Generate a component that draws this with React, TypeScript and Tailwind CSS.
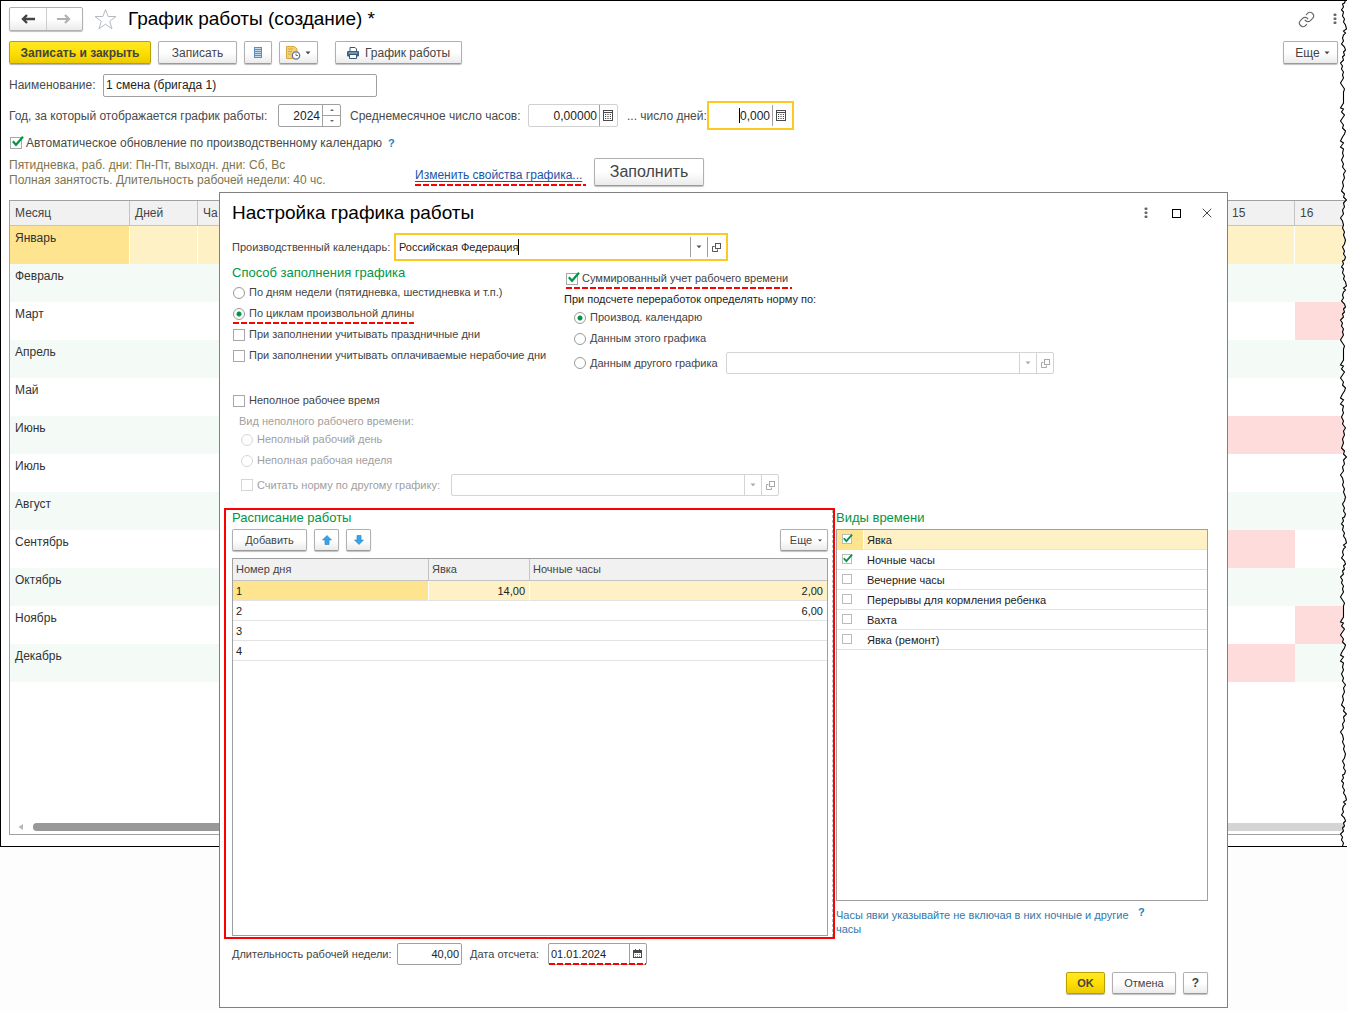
import type { ReactNode } from 'react';
import { Link as LinkIcon, X } from 'lucide-react';

const btn =
  'flex shrink-0 items-center justify-center rounded-[2px] border border-[#b0b0b0] border-b-[#9a9a9a] bg-gradient-to-b from-white from-50% to-[#ebebeb] text-[#444] shadow-[0_1px_1px_rgba(0,0,0,0.25)]';
const yellowBtn =
  'flex shrink-0 items-center justify-center rounded-[2px] border border-[#b8a000] bg-gradient-to-b from-[#ffe924] via-[#ffdf00] to-[#eccb00] font-bold text-[#444] shadow-[0_1px_1px_rgba(0,0,0,0.3)]';

function Caret() {
  return (
    <svg width="6" height="4" viewBox="0 0 6 4" fill="currentColor" aria-hidden="true">
      <path d="M0.5 0.5h5L3 3.3z" />
    </svg>
  );
}

function Dots() {
  return (
    <svg width="4" height="12" viewBox="0 0 4 12" fill="#666" aria-hidden="true">
      <rect x="0.5" y="0.5" width="3" height="2.6" rx="1" />
      <rect x="0.5" y="4.5" width="3" height="2.6" rx="1" />
      <rect x="0.5" y="8.5" width="3" height="2.6" rx="1" />
    </svg>
  );
}

function OpenIcon() {
  return (
    <svg width="9" height="9" viewBox="0 0 9 9" fill="none" stroke="currentColor" aria-hidden="true">
      <rect x="3.5" y="0.5" width="5" height="5" />
      <path d="M2.5 3.5h-2v5h5v-2" />
    </svg>
  );
}

function CalcIcon() {
  return (
    <svg width="10" height="12" viewBox="0 0 10 12" fill="none" stroke="#4a4a4a" aria-hidden="true">
      <rect x="0.5" y="0.5" width="9" height="10" />
      <path d="M1 2.5h8" />
      <path d="M2 4.5h6M2 6.5h6M2 8.5h6" strokeDasharray="1.2 1.2" />
    </svg>
  );
}

function CalendarIcon() {
  return (
    <svg width="9" height="10" viewBox="0 0 9 10" fill="none" stroke="#4a4a4a" aria-hidden="true">
      <rect x="0.5" y="1.5" width="8" height="7" />
      <path d="M1 2.5h7M1 3.5h7M2.5 0v2M6.5 0v2" />
      <path d="M2 5.5h5M2 7.5h5" strokeDasharray="1 1" strokeOpacity="0.6" />
    </svg>
  );
}

function RedDashes() {
  return (
    <span className="absolute inset-x-0 -bottom-px h-0.5 bg-[repeating-linear-gradient(90deg,#f00_0_6px,transparent_6px_8px)]" />
  );
}

function Check({
  label,
  checked,
  disabled,
  className = '',
}: {
  label: string;
  checked?: boolean;
  disabled?: boolean;
  className?: string;
}) {
  return (
    <label className={`flex items-center gap-1 whitespace-nowrap ${disabled ? 'text-[#a0a0a0]' : ''} ${className}`}>
      <span className="relative flex">
        <input
          type="checkbox"
          defaultChecked={checked}
          disabled={disabled}
          className={`peer size-3 appearance-none border bg-white ${disabled ? 'border-[#d6d6d6]' : 'border-[#a8a8a8]'}`}
        />
        <svg
          className="pointer-events-none absolute bottom-0.5 left-0.5 hidden peer-checked:block"
          width="12"
          height="11"
          viewBox="0 0 12 11"
          fill="none"
          stroke="#009646"
          strokeWidth="2.2"
        >
          <path d="M0.8 5.2l3.2 3.6L11 0.8" />
        </svg>
      </span>
      {label}
    </label>
  );
}

function Radio({ label, name, checked, disabled }: { label: string; name: string; checked?: boolean; disabled?: boolean }) {
  return (
    <label className={`flex items-center gap-1 whitespace-nowrap ${disabled ? 'text-[#a0a0a0]' : ''}`}>
      <input
        type="radio"
        name={name}
        defaultChecked={checked}
        disabled={disabled}
        className={`size-3 appearance-none rounded-full border bg-white checked:bg-[radial-gradient(circle,#009646_0_2px,transparent_3px)] ${
          disabled ? 'border-[#d6d6d6]' : 'border-[#999]'
        }`}
      />
      {label}
    </label>
  );
}

function Picker({ label, value, disabled }: { label: string; value?: string; disabled?: boolean }) {
  const line = disabled ? 'border-[#d4d4d4]' : 'border-[#a0a0a0]';
  return (
    <div
      className={`flex bg-white ${
        disabled
          ? 'h-[22px] w-[328px] rounded-[2px] border border-[#d4d4d4] text-[#a8a8a8]'
          : 'w-[334px] border-2 border-[#fbc91f] p-0.5 text-[#555]'
      }`}
    >
      <input aria-label={label} defaultValue={value} disabled={disabled} className="min-w-0 flex-1 px-px text-[#222] outline-none" />
      <button aria-label="Выбрать" disabled={disabled} className={`flex w-[17px] items-center justify-center border-l ${line}`}>
        <Caret />
      </button>
      <button aria-label="Открыть" disabled={disabled} className={`flex w-[17px] items-center justify-center border-l ${line}`}>
        <OpenIcon />
      </button>
    </div>
  );
}

const months: [string, boolean, boolean][] = [
  ['Январь', false, false],
  ['Февраль', false, false],
  ['Март', false, true],
  ['Апрель', false, false],
  ['Май', false, false],
  ['Июнь', true, true],
  ['Июль', false, false],
  ['Август', false, false],
  ['Сентябрь', true, false],
  ['Октябрь', false, false],
  ['Ноябрь', false, true],
  ['Декабрь', true, false],
];

const edge = [
  [6, 0], [5, 3], [3, 4], [4, 7], [2, 10], [4, 12], [3, 16], [5, 19], [4, 22], [6, 25], [7, 29], [4, 31], [6, 33], [4, 35],
  [3, 38], [4, 41], [2, 44], [5, 47], [6, 50], [4, 52], [5, 55], [3, 57], [4, 60], [1, 63], [3, 66], [2, 69], [4, 72], [3, 75],
  [4, 78], [1, 83], [3, 86], [5, 89], [4, 92], [4, 103], [1, 108], [4, 109], [2, 112], [5, 115], [3, 118], [1, 121], [4, 125],
  [3, 128], [6, 131], [5, 134], [3, 137], [1, 141], [4, 143], [1, 147], [4, 149], [3, 153], [4, 156], [2, 160], [4, 164], [3, 167],
  [6, 171], [4, 174], [5, 178], [3, 182], [4, 186], [2, 191], [5, 194], [4, 197], [7, 200], [4, 203], [5, 207], [3, 210], [4, 214],
  [1, 218], [3, 221], [4, 225], [3, 228], [5, 232], [4, 235], [6, 240], [5, 244], [3, 247], [5, 251], [4, 254],
];

function TornEdge() {
  const points = [0, 257, 514, 771]
    .flatMap((base) => edge.map(([x, y]) => [x, y + base]))
    .filter(([, y]) => y <= 847)
    .map(([x, y]) => `${x + 0.5},${y}`)
    .join(' ');
  return (
    <svg className="absolute -top-px right-0" width="8" height="846" viewBox="0 0 8 846" fill="none" aria-hidden="true">
      <polygon points={`${points} 8,847 8,0`} fill="#fff" />
      <polyline points={`${points} 4.5,847`} stroke="#000" strokeWidth="1.1" />
      <path d="M5 0.5h3" stroke="#000" />
    </svg>
  );
}

function MainTable() {
  const th = 'border-r border-b border-[#c4c4c4] bg-[#f1f1f1] px-[5px] text-left font-normal text-[#444]';
  return (
    <div className="mt-3 flex min-h-[635px] flex-col border border-r-0 border-[#a0a0a0] bg-white">
      <table className="w-full table-fixed border-separate border-spacing-0 text-xs">
        <colgroup>
          <col className="w-[120px]" />
          <col className="w-[68px]" />
          <col className="w-[68px]" />
          <col />
          <col className="w-[68px]" />
          <col className="w-[52px]" />
        </colgroup>
        <thead>
          <tr className="h-[25px]">
            <th className={th}>Месяц</th>
            <th className={th}>Дней</th>
            <th className={th}>Ча</th>
            <th className={th} />
            <th className={th}>15</th>
            <th className={th}>16</th>
          </tr>
        </thead>
        <tbody className="text-[#333]">
          {months.map(([name, d15, d16], i) => {
            const base = i === 0 ? 'bg-[#fdf1c5] border-r border-white' : i % 2 ? 'bg-[#f4fbf7]' : 'bg-white';
            return (
              <tr key={name} className="h-[38px]">
                <td className={`px-[5px] pt-1 align-top ${i === 0 ? 'border-r border-white bg-[#ffe48f]' : base}`}>{name}</td>
                <td className={base} />
                <td className={base} />
                <td className={base} />
                <td className={d15 ? 'bg-[#ffdcdc]' : base} />
                <td className={d16 ? 'bg-[#ffdcdc]' : base} />
              </tr>
            );
          })}
        </tbody>
      </table>
      <div className="mt-auto mb-[3px] flex h-2 items-center">
        <svg className="mr-2.5 ml-2" width="5" height="6" viewBox="0 0 5 6" fill="#b8b8b8" aria-hidden="true">
          <path d="M5 0v6L0.5 3z" />
        </svg>
        <div className="h-2 flex-1 rounded-full bg-[#d4d4d4]">
          <div className="h-2 w-3/5 rounded-full bg-[#999]" />
        </div>
      </div>
    </div>
  );
}

function MainWindow() {
  return (
    <main className="relative border-y border-l border-black bg-white pb-[11px] pl-2 text-xs text-[#4a4a4a]">
      <header className="flex h-9 items-center">
        <div className="flex h-6 w-[74px] overflow-hidden rounded-[2px] border border-[#b0b0b0] bg-gradient-to-b from-white from-50% to-[#ebebeb] shadow-[0_1px_1px_rgba(0,0,0,0.25)]">
          <button aria-label="Назад" className="flex flex-1 items-center justify-center border-r border-[#ccc]">
            <svg width="14" height="10" viewBox="0 0 14 10" fill="none" stroke="#444" strokeWidth="2.4" aria-hidden="true">
              <path d="M14 5H2M6 1L2 5l4 4" />
            </svg>
          </button>
          <button aria-label="Вперед" className="flex flex-1 items-center justify-center">
            <svg width="14" height="10" viewBox="0 0 14 10" fill="none" stroke="#b0b0b0" strokeWidth="2.2" aria-hidden="true">
              <path d="M0 5h12M8 1l4 4-4 4" />
            </svg>
          </button>
        </div>
        <button aria-label="В избранное" className="ml-[11px]">
          <svg width="23" height="22" viewBox="0 0 23 22" fill="none" stroke="#b4bac4" aria-hidden="true">
            <path d="M11.5 1.5l2.6 7h7.9l-6.3 4.8 2.3 7.5-6.5-4.6L5 20.8l2.3-7.5L1 8.5h7.9z" />
          </svg>
        </button>
        <h1 className="ml-[11px] text-[19px] text-black">График работы (создание) *</h1>
        <button aria-label="Ссылка" className="ml-auto text-[#666]">
          <LinkIcon size={17} strokeWidth={1.6} />
        </button>
        <button aria-label="Меню" className="mr-2.5 ml-[18px]">
          <Dots />
        </button>
      </header>

      <div className="mt-1 flex h-6 pr-[9px] [&>button]:h-[23px]">
        <button className={`${yellowBtn} w-[142px]`}>Записать и закрыть</button>
        <button className={`${btn} ml-[7px] w-[79px]`}>Записать</button>
        <button aria-label="Список" className={`${btn} ml-[7px] w-7`}>
          <svg width="8" height="12" viewBox="0 0 8 12" aria-hidden="true">
            <rect width="8" height="11" fill="#5f8fb8" />
            <path d="M1 1.5h6M1 3.5h6M1 5.5h6M1 7.5h6M1 9.5h6" stroke="#c4dcee" />
          </svg>
        </button>
        <button aria-label="Отчеты" className={`${btn} ml-[7px] w-[39px] gap-1`}>
          <svg width="15" height="14" viewBox="0 0 15 14" fill="none" aria-hidden="true">
            <path d="M0.5 0.5h8l2.5 2.5v9.5H0.5z" fill="#f3d078" stroke="#d4a843" />
            <path d="M2 3h5M2 5.5h4M2 8h3" stroke="#d4a843" />
            <circle cx="10" cy="9.5" r="3.7" fill="#fff" stroke="#5b7896" strokeWidth="1.3" />
            <path d="M10 9.5V7.5M10 9.5h2" stroke="#d0506a" />
          </svg>
          <Caret />
        </button>
        <button className={`${btn} ml-[17px] w-[127px] gap-1.5`}>
          <svg width="12" height="12" viewBox="0 0 12 12" aria-hidden="true">
            <path d="M3 0.5h5l1.5 1.5v3H3z" fill="#fff" stroke="#38566f" />
            <rect y="4" width="12" height="5.5" rx="1" fill="#38607f" />
            <path d="M1.5 6h9" stroke="#a9cbe3" />
            <path d="M2.5 7.5h7v4h-7z" fill="#fff" stroke="#38566f" />
          </svg>
          График работы
        </button>
        <button className={`${btn} ml-auto w-[55px] gap-1 pl-1`}>
          Еще <Caret />
        </button>
      </div>

      <div className="mt-2 flex h-6 items-center">
        <label htmlFor="name" className="w-[94px]">Наименование:</label>
        <input id="name" defaultValue="1 смена (бригада 1)" className="h-[23px] w-[274px] rounded-[2px] border border-[#a0a0a0] px-0.5 text-[#222]" />
      </div>

      <div className="mt-1 flex h-[29px] items-center whitespace-nowrap">
        <label htmlFor="year" className="w-[269px]">Год, за который отображается график работы:</label>
        <div className="flex h-[23px] w-[63px] rounded-[2px] border border-[#a0a0a0]">
          <input id="year" defaultValue="2024" className="min-w-0 flex-1 pr-0.5 text-right text-[#222]" />
          <div className="flex w-[18px] flex-col border-l border-[#a0a0a0] text-[#666]">
            <button aria-label="Больше" className="flex flex-1 items-center justify-center border-b border-[#a0a0a0]">
              <svg width="4" height="2" viewBox="0 0 4 2" fill="currentColor"><path d="M0 2L2 0l2 2z" /></svg>
            </button>
            <button aria-label="Меньше" className="flex flex-1 items-center justify-center">
              <svg width="4" height="2" viewBox="0 0 4 2" fill="currentColor"><path d="M0 0h4L2 2z" /></svg>
            </button>
          </div>
        </div>
        <label htmlFor="hours" className="ml-[9px] w-[178px]">Среднемесячное число часов:</label>
        <div className="flex h-[23px] w-[90px] rounded-[2px] border border-[#d0d0d0]">
          <input id="hours" defaultValue="0,00000" className="min-w-0 flex-1 pr-0.5 text-right text-[#222]" />
          <button aria-label="Калькулятор часов" className="flex w-[18px] items-center border-l border-[#a0a0a0] pl-[3px]">
            <CalcIcon />
          </button>
        </div>
        <label htmlFor="days" className="ml-[9px] w-20">... число дней:</label>
        <div className="relative flex h-[29px] w-[87px] border-2 border-[#fbc91f] p-0.5">
          <input id="days" defaultValue="0,000" className="min-w-0 flex-1 pr-0.5 text-right text-[#222]" />
          <button aria-label="Калькулятор дней" className="flex w-[18px] items-center border-l border-[#a0a0a0] pl-[3px]">
            <CalcIcon />
          </button>
          <span className="absolute top-[5px] left-[30px] h-[15px] w-px bg-black" />
        </div>
      </div>

      <div className="mt-[3px] flex h-5 items-center gap-1.5 pl-px">
        <Check label="Автоматическое обновление по производственному календарю" checked />
        <button aria-label="Справка" className="text-[11px] font-bold text-[#1e7fc0]">?</button>
      </div>

      <div className="mt-[5px] flex h-[30px] items-start">
        <p className="w-[406px] leading-[15px] text-[#7d754d]">
          Пятидневка, раб. дни: Пн-Пт, выходн. дни: Сб, Вс
          <br />
          Полная занятость. Длительность рабочей недели: 40 чс.
        </p>
        <span className="relative mt-[7px] flex h-5 w-[171px] items-center">
          <a href="#properties" className="whitespace-nowrap text-[#1a55a8] underline underline-offset-2">Изменить свойства графика...</a>
          <RedDashes />
        </span>
        <button className={`${btn} ml-2 h-[28px] w-[110px] text-base`}>Заполнить</button>
      </div>

      <MainTable />
      <TornEdge />
    </main>
  );
}

const schedule = [
  ['1', '14,00', '2,00'],
  ['2', '', '6,00'],
  ['3', '', ''],
  ['4', '', ''],
];

const kinds: [string, boolean][] = [
  ['Явка', true],
  ['Ночные часы', true],
  ['Вечерние часы', false],
  ['Перерывы для кормления ребенка', false],
  ['Вахта', false],
  ['Явка (ремонт)', false],
];

function Heading({ children }: { children: ReactNode }) {
  return <h3 className="text-[13px] leading-4 text-[#009646]">{children}</h3>;
}

function Schedule() {
  const th = 'border-r border-b border-[#c4c4c4] bg-[#f1f1f1] px-[3px] text-left font-normal text-[#444] last:border-r-0';
  return (
    <section className="relative h-[431px] border-2 border-[#f00] pr-[5px] pl-1.5">
      <Heading>Расписание работы</Heading>
      <div className="mt-[3px] flex h-[22px] gap-[7px]">
        <button className={`${btn} w-[75px]`}>Добавить</button>
        <button aria-label="Вверх" className={`${btn} w-[25px]`}>
          <svg width="10" height="10" viewBox="0 0 10 10" fill="#35a4e8" stroke="#2a7db5" strokeWidth="0.6" aria-hidden="true">
            <path d="M5 0.5L9.5 5H7v4.500H3V5H0.5z" />
          </svg>
        </button>
        <button aria-label="Вниз" className={`${btn} w-[25px]`}>
          <svg width="10" height="10" viewBox="0 0 10 10" fill="#35a4e8" stroke="#2a7db5" strokeWidth="0.6" aria-hidden="true">
            <path d="M5 9.5L9.5 5H7V0.500H3V5H0.5z" />
          </svg>
        </button>
        <button className={`${btn} ml-auto w-12 gap-1.5 pl-1`}>
          Еще
          <svg width="4" height="3" viewBox="0 0 4 3" fill="currentColor" aria-hidden="true">
            <path d="M0 0.5h4L2 2.5z" />
          </svg>
        </button>
      </div>
      <div className="mt-[7px] h-[378px] border border-[#a0a0a0]">
        <table className="w-full table-fixed border-separate border-spacing-0">
          <colgroup>
            <col className="w-[196px]" />
            <col className="w-[101px]" />
            <col />
          </colgroup>
          <thead>
            <tr className="h-[22px]">
              <th className={th}>Номер дня</th>
              <th className={th}>Явка</th>
              <th className={th}>Ночные часы</th>
            </tr>
          </thead>
          <tbody className="text-[#222]">
            {schedule.map(([n, a, b], i) => (
              <tr key={n} className={`h-5 [&>td]:border-b [&>td]:border-b-[#e2e2e2] [&>td]:pt-0.5 ${i === 0 ? 'bg-[#fdf1c5]' : ''}`}>
                <td className={`px-[3px] ${i === 0 ? 'border-r border-r-white bg-[#ffe48f]' : ''}`}>{n}</td>
                <td className={`px-1 text-right ${i === 0 ? 'border-r border-r-white' : ''}`}>{a}</td>
                <td className="px-1 text-right">{b}</td>
              </tr>
            ))}
          </tbody>
        </table>
      </div>
      <span className="absolute inset-y-0 right-0 border-r border-dashed border-[#bbb]" />
    </section>
  );
}

function TimeKinds() {
  return (
    <section className="pt-0.5">
      <Heading>Виды времени</Heading>
      <ul className="mt-[3px] h-[372px] border border-[#a0a0a0] text-[#222]">
        {kinds.map(([name, on], i) => (
          <li key={name} className={`border-b border-[#e2e2e2] ${i === 0 ? 'bg-[#fdf1c5]' : ''}`}>
            <label className="flex h-[19px]">
              <span className={`w-[27px] border-r pt-1 pl-[5px] ${i === 0 ? 'border-white bg-[#ffe48f]' : 'border-transparent'}`}>
                <span className="relative flex size-2.5">
                  <input type="checkbox" defaultChecked={on} className="peer size-2.5 appearance-none border border-[#bbb] bg-white" />
                  <svg
                    className="pointer-events-none absolute bottom-px left-px hidden peer-checked:block"
                    width="10"
                    height="9"
                    viewBox="0 0 12 11"
                    fill="none"
                    stroke="#009646"
                    strokeWidth="2.2"
                  >
                    <path d="M0.8 5.2l3.2 3.6L11 0.8" />
                  </svg>
                </span>
              </span>
              <span className="pl-[3px] leading-[21px]">{name}</span>
            </label>
          </li>
        ))}
      </ul>
      <div className="flex items-start gap-1 pt-[7px]">
        <p className="w-[298px] leading-[14px] text-[#3178ad]">Часы явки указывайте не включая в них ночные и другие часы</p>
        <button aria-label="Справка по часам" className="-mt-1 font-bold text-[#1e7fc0]">?</button>
      </div>
    </section>
  );
}

function SettingsDialog() {
  return (
    <div
      role="dialog"
      aria-labelledby="dialog-title"
      className="absolute top-[192px] right-[119px] left-[219px] border border-[#808080] bg-white pb-[13px] text-[11px] text-[#444]"
    >
      <header className="flex h-10 items-center pr-3 pl-3">
        <h2 id="dialog-title" className="text-[19px] text-black">Настройка графика работы</h2>
        <button aria-label="Меню окна" className="ml-auto"><Dots /></button>
        <button aria-label="Развернуть" className="ml-6 size-[9px] border border-black" />
        <button aria-label="Закрыть" className="ml-[18px] text-[#444]"><X size={16} strokeWidth={1.5} /></button>
      </header>

      <div className="relative flex h-7 pl-3">
        <span className="flex w-[162px] items-center">Производственный календарь:</span>
        <Picker label="Производственный календарь" value="Российская Федерация" />
        <span className="absolute top-1.5 left-[298px] h-4 w-px bg-black" />
      </div>

      <div className="flex pl-3">
        <div className="w-[332px] shrink-0 pt-0.5">
          <div className="h-[19px] pt-0.5"><Heading>Способ заполнения графика</Heading></div>
          <div className="flex flex-col items-start pl-px [&>*]:h-[21px]">
            <Radio name="method" label="По дням недели (пятидневка, шестидневка и т.п.)" />
            <div className="relative flex [&>span]:bottom-0">
              <Radio name="method" label="По циклам произвольной длины" checked />
              <RedDashes />
            </div>
            <Check label="При заполнении учитывать праздничные дни" />
            <Check label="При заполнении учитывать оплачиваемые нерабочие дни" />
            <Check label="Неполное рабочее время" className="mt-6" />
          </div>
          <p className="h-[18px] pt-px pl-[7px] leading-[18px] text-[#a0a0a0]">Вид неполного рабочего времени:</p>
          <div className="flex flex-col items-start pl-[9px] [&>label]:h-[21px]">
            <Radio name="part" label="Неполный рабочий день" disabled />
            <Radio name="part" label="Неполная рабочая неделя" disabled />
            <div className="mt-[3px] flex h-[22px] items-center">
              <Check label="Считать норму по другому графику:" disabled className="w-[210px]" />
              <Picker label="График нормы" disabled />
            </div>
          </div>
        </div>
        <div className="pt-[7px]">
          <div className="flex flex-col items-start pl-0.5">
            <div className="relative flex h-[21px] pr-1 [&>span]:bottom-0">
              <Check label="Суммированный учет рабочего времени" checked />
              <RedDashes />
            </div>
          </div>
          <p className="h-[18px] pt-px leading-[18px] text-[#222]">При подсчете переработок определять норму по:</p>
          <div className="flex flex-col items-start pl-2.5 [&>label]:h-[21px]">
            <Radio name="norm" label="Производ. календарю" checked />
            <Radio name="norm" label="Данным этого графика" />
            <div className="mt-[3px] flex h-[22px] items-center">
              <div className="w-[152px]"><Radio name="norm" label="Данным другого графика" /></div>
              <Picker label="Другой график" disabled />
            </div>
          </div>
        </div>
      </div>

      <div className="mt-3 grid grid-cols-[minmax(0,1fr)_372px] gap-px pr-[19px] pl-1">
        <Schedule />
        <TimeKinds />
      </div>

      <div className="mt-1 flex h-[22px] items-center pl-3">
        <label htmlFor="week" className="w-[165px]">Длительность рабочей недели:</label>
        <input id="week" defaultValue="40,00" className="h-[22px] w-[65px] rounded-[2px] border border-[#a0a0a0] px-0.5 text-right text-[#222]" />
        <label htmlFor="start" className="ml-2 w-[78px]">Дата отсчета:</label>
        <div className="relative flex h-[22px] w-[99px] rounded-[2px] border border-[#a0a0a0]">
          <input id="start" defaultValue="01.01.2024" className="min-w-0 flex-1 pl-0.5 text-[#222]" />
          <button aria-label="Календарь" className="flex w-[17px] items-center border-l border-[#a0a0a0] pl-[3px]">
            <CalendarIcon />
          </button>
          <RedDashes />
        </div>
      </div>

      <footer className="mt-[7px] flex h-[22px] justify-end gap-[7px] pr-[19px]">
        <button className={`${yellowBtn} w-[39px]`}>OK</button>
        <button className={`${btn} w-16`}>Отмена</button>
        <button aria-label="Помощь" className={`${btn} w-[25px] text-xs font-bold`}>?</button>
      </footer>
    </div>
  );
}

export default function App() {
  return (
    <div className="relative min-h-screen bg-[#fdfdfd] font-['Liberation_Sans',Arial,sans-serif]">
      <MainWindow />
      <SettingsDialog />
    </div>
  );
}
